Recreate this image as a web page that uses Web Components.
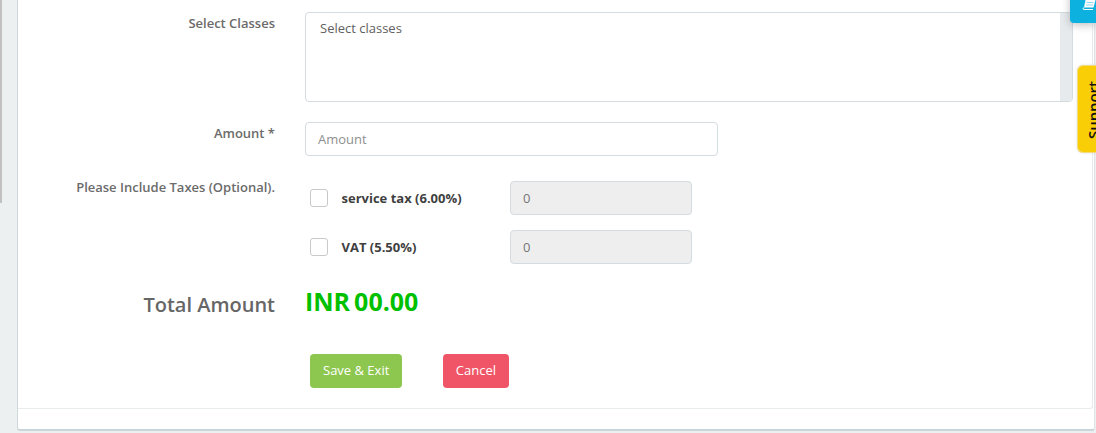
<!DOCTYPE html>
<html><head><meta charset="utf-8"><style>
html,body{margin:0;padding:0;height:433px;overflow:hidden;background:#ecf0f1;font-family:"Open Sans",sans-serif}
</style></head><body>
<app-page>
  <form-row label="Select Classes" style="--row-h:110px;--label-top:0px">
    <class-select placeholder="Select classes"></class-select>
  </form-row>
  <form-row label="Amount *" style="--row-h:59px;--label-top:0px">
    <text-field placeholder="Amount"></text-field>
  </form-row>
  <form-row label="Please Include Taxes (Optional)." style="--row-h:107px;--label-top:-5px">
    <tax-list>
      <tax-row label="service tax (6.00%)" value="0"></tax-row>
      <tax-row label="VAT (5.50%)" value="0"></tax-row>
    </tax-list>
  </form-row>
  <total-row label="Total Amount" amount="INR 00.00"></total-row>
  <form-actions>
    <ui-button kind="save">Save &amp; Exit</ui-button>
    <ui-button kind="cancel">Cancel</ui-button>
  </form-actions>
  <side-tabs slot="over"></side-tabs>
</app-page>
<script>
function def(name, html){
  customElements.define(name, class extends HTMLElement{
    connectedCallback(){
      if(this.shadowRoot) return;
      const r=this.attachShadow({mode:'open'});
      r.innerHTML=typeof html==='function'?html(this):html;
    }
  });
}
def('app-page',`<style>
:host{display:block;position:relative;width:1096px;height:433px;overflow:hidden;background:#ecf0f1}
.rail{position:absolute;left:0;top:0;width:2px;height:203px;background:#c1c1c1}
.card{position:absolute;left:17px;top:-4px;width:1078px;height:435px;box-sizing:border-box;background:#fff;border:1px solid #dfe5e8;border-left:1px solid #cfd8dc;border-bottom:2px solid #c9d5da;border-radius:0 0 3px 3px}
.inner{box-sizing:border-box;height:412px;margin-right:1px;padding-top:15px;border-bottom:1px solid #e8ebec;border-right:1px solid #e8ebec;border-radius:0 0 3px 0}
</style><div class="rail"></div><div class="card"><div class="inner"><slot></slot></div></div><slot name="over"></slot>`);
def('form-row',el=>`<style>
:host{display:flex;height:var(--row-h)}
.l{width:257px;box-sizing:border-box;text-align:right;position:relative;top:var(--label-top);padding-top:3px;font-size:13px;font-weight:600;color:#6b6b6b;line-height:17px;white-space:nowrap}
.c{margin-left:30px;flex:1}
</style><div class="l">${el.getAttribute('label')}</div><div class="c"><slot></slot></div>`);
def('class-select',el=>`<style>
:host{display:block;width:768px;height:90px;box-sizing:border-box;border:1px solid #d3dcdf;border-radius:4px;position:relative;overflow:hidden;background:#fff}
.t{padding:6px 14px;font-size:13px;line-height:18px;color:#606060}
.s{position:absolute;right:0;top:0;bottom:0;width:12px;background:#e7eaec}
</style><div class="t">${el.getAttribute('placeholder')}</div><div class="s"></div>`);
def('text-field',el=>`<style>
:host{display:block;width:413px;height:34px;box-sizing:border-box;border:1px solid #d3dcdf;border-radius:4px;background:#fff;padding:7px 12px;font-size:13px;line-height:18px;color:#8f8f8f}
</style>${el.getAttribute('placeholder')}`);
def('tax-list',`<style>:host{display:flex;flex-direction:column;gap:15px}</style><slot></slot>`);
def('tax-row',el=>`<style>
:host{display:flex;align-items:center;height:34px}
.b{width:18px;height:18px;box-sizing:border-box;border:1px solid #c9c9c9;border-radius:3px;margin-left:5px;background:#fff}
.l{width:168.500px;margin-left:13.500px;font-size:13px;font-weight:700;color:#3f3f3f;white-space:nowrap}
.v{width:182px;height:34px;box-sizing:border-box;border:1px solid #d3dcdf;border-radius:4px;background:#eee;padding:7px 12px;font-size:13px;line-height:18px;color:#777}
</style><div class="b"></div><div class="l">${el.getAttribute('label')}</div><div class="v">${el.getAttribute('value')}</div>`);
def('total-row',el=>{const [a,b]=el.getAttribute('amount').split(' ');return `<style>
:host{display:flex;height:66px;align-items:flex-start}
.l{width:257px;text-align:right;font-size:20px;font-weight:600;color:#666;line-height:27px;padding-top:3px;white-space:nowrap}
.a{margin-left:30px;font-size:25px;font-weight:700;color:#00c000;line-height:33px;display:flex;gap:4px;margin-top:-3px}
</style><div class="l">${el.getAttribute('label')}</div><div class="a"><span>${a}</span><span>${b}</span></div>`});
def('form-actions',`<style>:host{display:flex;gap:41px;padding-left:292px}</style><slot></slot>`);
def('ui-button',el=>{const s=el.getAttribute('kind')==='save';return `<style>
:host{display:block;height:34px;box-sizing:border-box;border-radius:4px;padding:0 ${s?13:12.5}px;font-size:13px;line-height:33px;color:#fff;white-space:nowrap;background:${s?'#8ec750':'#ef5566'}}
</style><slot></slot>`});
def('side-tabs',`<style>
.blue{position:absolute;left:1070px;top:-20px;width:26px;height:43px;background:#0db1e0;border-radius:0 0 0 4px;box-shadow:0 2px 8px rgba(0,0,0,.25)}
.blue svg{position:absolute;left:12px;top:20px}
.sup{position:absolute;left:1077px;top:65px;width:19px;height:88px;box-sizing:border-box;background:#f9ce07;border-radius:6px 0 0 6px;border:1px solid #f3dc80;border-right:0;overflow:hidden;box-shadow:0 0 3px rgba(0,0,0,.12)}
.sup span{position:absolute;left:7px;top:15px;writing-mode:vertical-rl;transform:rotate(180deg);font-size:15px;font-weight:600;color:#111;line-height:17px;white-space:nowrap}
</style><div class="blue"><svg width="14" height="11" viewBox="0 0 14 11"><path d="M3.500 0h10L11.500 7.500H2z" fill="#fff"/><path d="M2 7.500C.8 8 .8 9.500 2 9.500h9" fill="none" stroke="#fff" stroke-width="1"/><path d="M4.500 2.500h7M4 5h7" stroke="#6fcfeb" stroke-width=".8"/></svg></div><div class="sup"><span>Support</span></div>`);
</script></body></html>
